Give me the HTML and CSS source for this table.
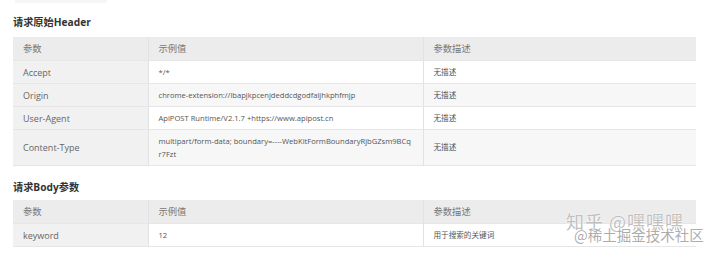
FILE: index.html
```html
<!DOCTYPE html>
<html lang="zh-CN">
<head>
<meta charset="utf-8">
<link rel="stylesheet" href="styles.css">
</head>
<body>
<div class="page">
  <div class="topbar"></div>
  <h2 class="title t1">请求原始Header</h2>
  <table class="params">
    <colgroup><col class="c1"><col class="c2"><col class="c3"></colgroup>
    <tr class="head"><td>参数</td><td>示例值</td><td>参数描述</td></tr>
    <tr class="row"><td>Accept</td><td>*/*</td><td>无描述</td></tr>
    <tr class="row alt"><td>Origin</td><td>chrome-extension://lbapjkpcenjdeddcdgodfaljhkphfmjp</td><td>无描述</td></tr>
    <tr class="row"><td>User-Agent</td><td>ApiPOST Runtime/V2.1.7 +https://www.apipost.cn</td><td>无描述</td></tr>
    <tr class="row alt tall"><td>Content-Type</td><td class="wrap">multipart/form-data; boundary=----WebKitFormBoundaryRjbGZsm9BCqr7Fzt</td><td>无描述</td></tr>
  </table>
  <h2 class="title t2">请求Body参数</h2>
  <table class="params">
    <colgroup><col class="c1"><col class="c2"><col class="c3"></colgroup>
    <tr class="head"><td>参数</td><td>示例值</td><td>参数描述</td></tr>
    <tr class="row"><td>keyword</td><td>12</td><td>用于搜索的关键词</td></tr>
  </table>
  <div class="watermark">
    <span class="wm1">知乎 @嘿嘿嘿</span>
    <span class="wm2">@稀土掘金技术社区</span>
  </div>
</div>
</body>
</html>
```
FILE: styles.css
```css
html, body {
  margin: 0;
  padding: 0;
  background: #fff;
}
.page {
  position: relative;
  width: 720px;
  height: 256px;
  overflow: hidden;
  padding: 0 0 0 13px;
  box-sizing: border-box;
  font-family: "Open Sans", "Noto Sans CJK SC", sans-serif;
}
.topbar {
  width: 92px;
  height: 3px;
  margin-left: 2px;
  background: #f6f6f6;
}
.title {
  margin: 0;
  font-size: 10.2px;
  line-height: 16px;
  font-weight: bold;
  color: #333;
  font-family: "Open Sans", "Noto Sans CJK SC", sans-serif;
}
.t1 { margin-top: 11px; margin-bottom: 7px; }
.t2 { margin-top: 13px; margin-bottom: 5px; }
.params {
  border-collapse: collapse;
  table-layout: fixed;
  width: 683px;
}
.c1 { width: 135px; }
.c2 { width: 275px; }
.c3 { width: 273px; }
.params td {
  padding: 0 10px 0 10px;
  vertical-align: middle;
  border-left: 1px solid #e2e2e2;
  border-bottom: 1px solid #e6e6e6;
  color: #555;
  font-size: 7.6px;
  line-height: 13px;
}
.params td:first-child {
  border-left: none;
  background: #f1f1f1;
  color: #666;
  font-size: 9px;
}
.head td {
  height: 23px;
  background: #ececec;
  color: #777;
  font-size: 9.3px;
}
.head td:first-child { background: #ececec; color: #777; font-size: 9.3px; }
.row td { height: 22px; background: #fff; }
.row.alt td { background: #f7f7f7; }
.row td:first-child { background: #f1f1f1; }
.tall td { height: 35px; }
.wrap { word-break: break-all; }
.watermark {
  position: absolute;
  left: 566px;
  top: 210px;
  width: 150px;
  font-family: "Noto Sans CJK SC", sans-serif;
  color: rgba(170, 170, 170, 0.75);
  text-shadow: 0 0 1px #fff, 0 0 2px #fff;
  pointer-events: none;
}
.wm1 {
  display: block;
  font-size: 18px;
  line-height: 22px;
  letter-spacing: 1px;
}
.wm2 {
  display: block;
  margin-top: -6px;
  margin-left: 8px;
  font-size: 14.5px;
  line-height: 18px;
  color: rgba(150, 150, 150, 0.8);
}
```
